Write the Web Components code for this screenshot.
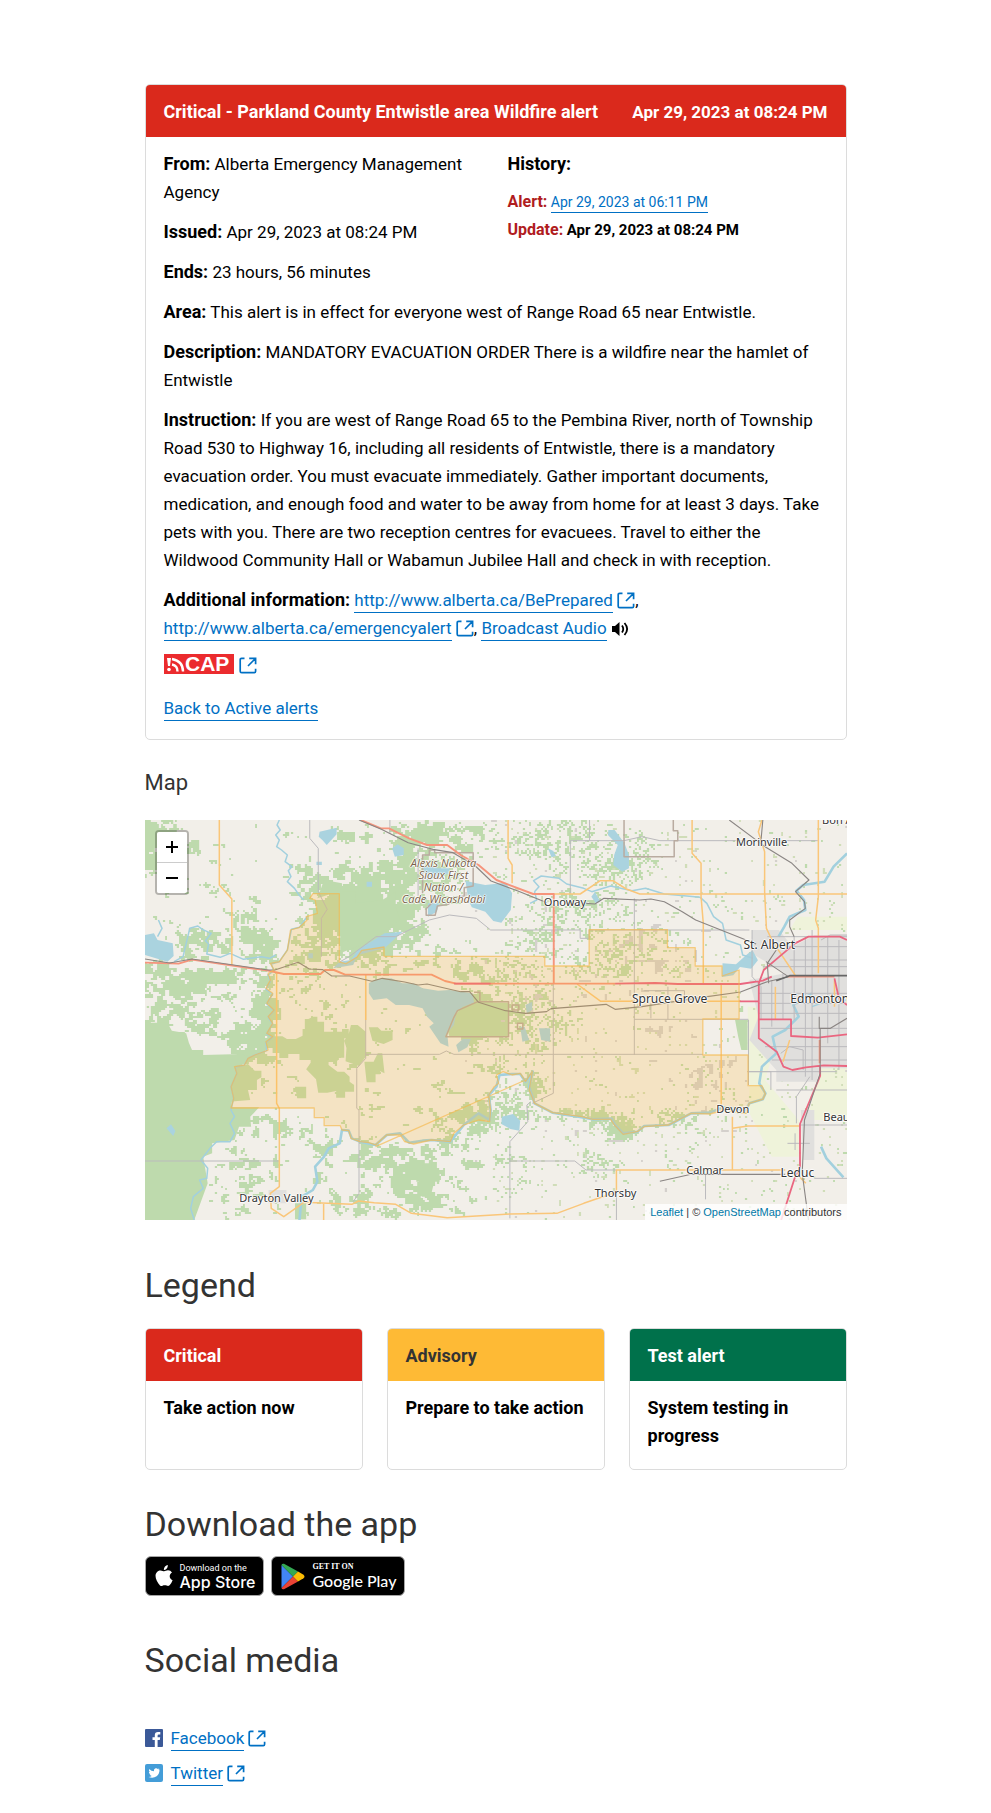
<!DOCTYPE html>
<html lang="en">
<head>
<meta charset="utf-8">
<meta name="viewport" content="width=device-width, initial-scale=1">
<title>Wildfire alert - Parkland County Entwistle area</title>
<style>
body { margin: 0; background: #fff; color: #000; font: 17px/28px Roboto, "Liberation Sans", sans-serif; }
</style>
</head>
<body>
<alert-page></alert-page>
<script>
function define(name, html, setup) {
  const template = document.createElement('template');
  template.innerHTML = html;
  customElements.define(name, class extends HTMLElement {
    connectedCallback() {
      if (this.shadowRoot) return;
      this.attachShadow({ mode: 'open' }).append(template.content.cloneNode(true));
      if (setup) setup(this, this.shadowRoot);
    }
  });
}

/* Arrow leaving a box, shown after links to other sites */
define('external-icon', `
<style>
:host { display: inline-block; width: 18px; height: 17px; vertical-align: -3px; }
svg { display: block; }
</style>
<svg width="18" height="17" viewBox="0 0 18 17" fill="none" stroke="#0070c4" stroke-width="1.7" aria-hidden="true">
<path d="M5.5 1.3H2.6Q1.2 1.3 1.2 2.7V14.2Q1.2 15.7 2.7 15.7H15.3Q16.6 15.7 16.6 14.2V11.8M10.2 1.3H16.6V7.3M16.4 1.5L9 9"/>
</svg>`);

define('alert-card', `
<style>
:host { display: flex; flex-direction: column; border: 1px solid #dcdcdc; border-radius: 5px; overflow: hidden; --tone: #da291c; --ink: #fff; }
:host([tone=advisory]) { --tone: #feba35; --ink: #333; }
:host([tone=test]) { --tone: #00714b; --ink: #fff; }
header { display: flex; justify-content: space-between; gap: 16px; padding: 13px 18px 11px; background: var(--tone); color: var(--ink); font-size: 18px; font-weight: 700; }
::slotted([slot=date]) { font-size: 17px; }
section { padding: 13px 18px 17px; }
:host([tone]) section { padding-bottom: 19px; }
</style>
<header><slot name="title"></slot><slot name="date"></slot></header>
<section><slot></slot></section>`);

define('store-badge', `
<style>
:host { display: block; }
a { display: flex; align-items: center; height: 38px; border: 1px solid #a6a6a6; border-radius: 6px; background: #000; color: #fff; text-decoration: none; padding: 0 8px 0 9px; gap: 7px; }
span { display: flex; flex-direction: column; }
small { font-size: 9px; line-height: 11px; white-space: nowrap; }
b { font: 500 16px/16px Inter, sans-serif; white-space: nowrap; }
:host([store=google]) small { font: 700 8px/10px "Liberation Serif", serif; }
:host([store=google]) b { font: 500 16px/18px Lato, sans-serif; }
</style>
<a href="#"><slot name="icon"></slot><span><small><slot name="over"></slot></small><b><slot></slot></b></span></a>`);

define('social-link', `
<style>
:host { display: flex; align-items: center; line-height: 28px; }
::slotted(svg) { display: block; width: 18px; height: 18px; margin-right: 8px; }
a { color: #0070c4; text-decoration: none; }
a span { border-bottom: 1px solid #0070c4; padding-bottom: 2px; }
external-icon { margin-left: 4px; }
</style>
<slot name="icon"></slot><a href="#"><span><slot></slot></span><external-icon></external-icon></a>`);

define('map-place', `
<style>
:host { position: absolute; transform: translate(-50%, -50%); font: 11px/12px "Noto Sans", sans-serif; color: #333; white-space: nowrap; text-align: center; text-shadow: 1px 0 1px #fff, -1px 0 1px #fff, 0 1px 1px #fff, 0 -1px 1px #fff; }
:host([size=large]) { font-size: 12px; }
:host([kind=reserve]) { font-family: "Open Sans", sans-serif; font-style: italic; color: #7a624a; }
</style>
<slot></slot>`, host => { host.style.left = host.getAttribute('x') + '%'; host.style.top = host.getAttribute('y') + '%'; });

define('area-map', `
<style>
:host { display: block; position: relative; height: 400px; overflow: hidden; background: #f2efe9; }
svg { display: block; width: 100%; height: 100%; }
svg * { vector-effect: non-scaling-stroke; }
.zoom { position: absolute; left: 10px; top: 10px; border: 2px solid rgba(0,0,0,.25); border-radius: 4px; display: grid; overflow: hidden; }
.zoom button { width: 30px; height: 30px; padding: 0; border: 0; background: #fff; color: #000; display: grid; place-items: center; }
.zoom button:first-child { height: 31px; border-bottom: 1px solid #ccc; }
.zoom svg { width: 14px; height: 14px; }
.credit { position: absolute; right: 0; bottom: 0; padding: 0 5px; background: rgba(255,255,255,.8); color: #333; font: 11px/16px "Liberation Sans", sans-serif; }
.credit a { color: #0078a8; text-decoration: none; }
</style>
<svg viewBox="0 0 1568 1200" preserveAspectRatio="none" fill="none" stroke-linejoin="round" role="img" aria-label="Map of the alert area">
  <path fill="#eff3da" d="M1346 560H1420V620L1385 780L1460 900V1010H1400L1350 880V790ZM1440 330h128v-40h-110zM1510 640l58-20v280h-90l30-140z"/>
  <path id="woods" fill="#bedaad"/>
  <path id="specks" fill="#d0ddb8"/>
  <path fill="#bedaad" d="M0 608H50L60 632L92 640L98 668L105 690L130 690V705L215 702L240 712L210 740L200 800L192 862H255L235 890L237 920H210L200 960L150 970V1000L130 1010L140 1090L110 1200H0ZM385 235L400 180L440 190V215H470V250L530 240L560 215V260L570 300L520 345L500 365L436 400V220H420ZM676 630L690 590L705 565L735 545L812 548V650H680ZM1318 600H1346V690H1332L1325 650ZM335 1150h25v48h-25z"/>
  <path fill="#bedaad" d="M375 590h10v15h15v30h40v-8h15v28h-10v58h-15v10h-20v12l20 20h15l12 15v15l10 10v20h-20v18h-20v-20l-20 5h-20l-5-40-22-30 10-20v-8h-25v-18h-25v12h-20v-15h-15v-50h22l10 8h20l15-10v-20h5v-30h8zM460 615h15l18 20v75l-15 28-30-14 2-40-5-22 10-20zM205 742l25-10 15 20h15v20l-10 8v30h-20l5 30-48 5v-35zM500 622h20l8 10h25v28l-20 12-25-10zM622 1030h18v20h18v35h-12l-8 45h-20v-45h-12v-40h12zM520 700h10l5 60-30-20zM490 725h20v18h15v20h-10v24h-20zM335 800h25v35h-20z"/>
  <path id="towns" fill="#d4d0cc"/>
  <path fill="#e0dfdd" d="M1356 330h60l30 50 50-35h72v400h-60l-8 40h-90v-35l-60-90 20-70-20-110 80-20-75-60zM1465 870h30v150h-25zM276 1110h40v40h-40z"/>
  <g fill="#aad3df">
    <path d="M716 182L740 190L760 195L806 188L820 220L817 270L796 308L778 303L760 275L730 262L722 240ZM0 345L20 340L28 360L62 370L64 408L50 425L0 405ZM390 35l38-12v20l-22 32-10-15-8-10zM552 85l12-12 14 12v20l-20 5zM1035 30l14 0 22 40 10 35v40l-15 10-20-20 2-30 8-30-22-30zM1290 430l30 3 25-30 12-12 12 30-15 25-25-5-15 25-25 5zM797 890l25-8 16 20-2 30-20-5-20-15zM475 390l60-50 40-5-40 50-60 20-10 30-45 10 15-20 25-5zM48 925l10-12 10 20-5 15zM620 140l30 0 10 30-30 10zM650 145h30v18h-30zM632 250l25 0-5 25-20 15zM1005 215l12 30-10 5-10-20zM900 85l12 8 6 15-10 4zM365 400h10v15h-10zM383 125h12v10h-12zM495 185h12v15h-12z"/>
    <path d="M500 490L515 478L550 475L575 490L600 490L620 505L655 512L680 510L732 520L735 548L710 560L695 580L690 615L675 640L678 680L660 670L635 620L645 610L630 590L620 565L590 555L560 555L540 535L510 540L500 520ZM695 675l15-18h18l-8 25-20 15zM838 620h10l10 40-15 5zM880 625h25v40l-20-5zM850 555l15-10v25l-12 10z"/>
  </g>
  <g stroke="#a2d0de" stroke-width="1.500">
    <path d="M300 0L295 15L302 30L292 45L300 60L294 80L305 90L318 105L313 125L328 140L320 152L326 170L318 185L334 205L344 225L355 240"/>
    <path d="M65 425L85 410L100 325L118 318L128 328L148 340L135 362L142 372L138 402L168 412L190 400L220 418L260 410L278 415L292 405M30 300L38 325L28 350"/>
    <path d="M362 290L345 322L327 328L318 390L300 425L282 432L288 452L275 465L280 485L270 508L285 522L272 552L288 572L275 592L285 612L272 642L285 652L270 668L272 692L245 705L230 715L222 735L202 742L205 762L192 800L198 835L192 870L200 890L190 910L200 940L190 965L160 965L145 985L125 1020L140 1045L138 1075L122 1080L130 1105L108 1130L102 1165L110 1200"/>
    <path stroke-width="2.600" d="M345 1200L350 1130L375 1110L385 1085L380 1040L400 1010L410 985L435 970L440 930L455 932L462 955L480 965L515 975L540 945L570 940L590 968L620 962L640 960L682 965L712 915L745 880L770 900L772 870L768 825L785 800L792 765L820 762L838 762L850 785L866 755L858 800L870 850L910 878L975 892L1000 898L1042 896L1050 915L1068 940L1100 935L1115 918L1170 915L1220 880L1262 878L1290 862L1342 870L1350 850L1380 838L1386 820L1372 790L1378 740L1410 700L1402 650L1430 630L1460 590L1448 555L1490 520"/>
    <path d="M870 215L880 200L868 182L885 168L925 175L942 192L980 205L998 215L1040 198L1088 212L1118 205L1160 222L1210 228L1240 232L1255 250L1270 290L1290 310L1298 360L1330 375L1335 405L1358 415M870 215L875 240L860 250M1490 560L1520 545L1568 540"/>
    <path d="M1568 100L1538 140L1518 185L1470 195L1455 212L1472 240L1475 270L1440 290L1428 320L1415 350M1510 980L1522 1015L1560 1072" stroke-width="2.600"/>
  </g>
  <g stroke="#bbbabd" stroke-width="1">
    <path d="M368 0V55L387 85V215L407 268L394 295V410M610 85V245M547 0V42M950 220V62H1070L1110 50L1150 62H1503M436 425L456 410L516 350H560L635 300L680 285L740 295L772 330H972V355H992V329M992 330H1350M1093 235V705M912 490V820L865 850M493 465V715L473 745V865L478 870V1120L465 1145M493 703H658L673 693L690 703H1246M815 1195V965L855 905L853 855L862 845M0 1023H300M815 1023H960L985 1050H1053M1053 1110V1200M1252 1062V1138M1462 915H1568M1495 1075H1568M993 0V62"/>
    <path d="M1390 350H1568M1380 380H1568M1440 420H1568M1380 440H1568M1370 520H1568M1370 550H1568M1370 580H1568M1375 625H1568M1385 680H1568M1400 720H1568M1345 755H1545M1410 810H1568M1348 700V755H1398V810M1400 480V620M1425 460V600M1450 350V600M1475 350V770M1490 330V780M1525 350V670M1550 360V750M1356 330V470L1376 500V600M1485 770L1455 830V910M1435 970H1485M1452 940V990M1093 598H1348M1130 550V595M1168 500V598M1115 512H1205V530M1348 600V795M1510 360L1530 345H1568M1420 700L1440 680L1470 690V750"/>
  </g>
  <g stroke="#b9aba0" stroke-width="1.500"><path d="M1070 0V110H1182V62H1190V32H1180V0M620 220V105H635V90H647V98H733V198L713 203V228L688 233L678 253L653 258L648 286H628V266L643 246V226M812 545V650H672L690 592L698 572L743 545ZM820 555H835V570H820ZM832 610H844V627H832ZM735 517H748V547"/></g>
  <g stroke="#fac679" stroke-width="1.500">
    <path d="M166 0V195L194 237V435M294 455V850L300 865V1100L280 1120L282 1165L310 1190L355 1147L462 1153L477 1143L512 1148L560 1153L595 1180L675 1193L815 1182L920 1180L980 1150L1045 1120L1053 1112V1050H1430M399 1152V1200M811 0V115L820 135V190M493 465V600M1222 0V100L1242 130V230L1247 310V490M1378 0L1370 35L1384 95V215L1388 325L1402 365L1452 465M1504 0V230L1498 300L1504 325V460M912 222H972L1017 182H1045L1075 207L1105 222H1568M965 492L1018 544H1093M1240 544H1330M1287 492V855M1312 890V1050M1312 925L1347 918H1462M1408 500V600M1440 660L1425 725M1540 480V560M1462 1070L1476 1090"/>
  </g>
  <path stroke="#f6947c" stroke-width="1.900" d="M482 0L527 25H545L590 55L630 75H675L705 105L745 135L785 180L867 222H913V490M0 428L75 431L105 419L275 452L310 462H392L402 450H422L447 464H640L670 483L695 491H1050M1435 470H1540M1507 660V730"/>
  <path stroke="#ea6680" stroke-width="1.800" d="M690 491H772M1050 491L1140 489L1190 492H1330L1380 482L1400 470M1371 490V655L1411 695L1426 740L1446 750L1476 742L1516 736L1568 738M1371 598H1443V648L1503 653L1568 643M1371 490L1382 450L1417 410L1452 370L1482 350H1552L1568 360M1328 544H1372M1508 735V768L1463 912V1042L1451 1075L1421 1200M1540 475L1550 535L1568 555"/>
  <path stroke="#8a8583" stroke-width="1.100" d="M478 0L528 28L588 68L643 88L688 98L738 138L773 183L833 213L898 248M985 250L1005 252L1025 235L1105 240L1130 237L1160 245L1200 275L1230 300L1365 372M0 417L55 429L105 417L275 450H290L342 427L367 447L397 449L417 468H457L507 484L530 475L580 486L610 495L630 492L705 515H725L745 547L805 572L850 580L897 575L907 566L1030 553L1050 568L1110 560L1240 533L1330 516L1390 485L1437 470M1305 0L1385 80L1445 130L1483 180L1453 215L1473 245L1475 265L1440 300V320L1450 350M1380 0L1376 60M1393 490L1390 430L1410 390M1437 470L1387 425M1506 590V625H1531L1568 595M1508 625V760L1473 900L1468 1060L1482 1200M1150 1084L1220 1063H1430"/>
  <path stroke="#666" stroke-width="1.600" d="M1410 482L1440 467H1568"/>
  <path fill="#ffb32b" fill-opacity=".2" stroke="#f6b84b" stroke-opacity=".65" stroke-width="1.300" d="M375 221H434V426L449 431L474 411L484 391L534 381V409H893V438H992V329H1167V383H1229V438H1289V468L1327 450V597H1246V705H1347V797H1378L1386 822L1380 838L1350 850L1342 880L1290 872L1262 882L1220 880L1170 915L1115 920L1100 935L1068 943L1048 915L1040 898L1000 898L975 890L910 878L870 850L858 810L865 755L850 785L838 760L820 765L800 755L785 765L790 790L780 800L768 825L772 870L770 905L745 900L712 915L690 940L682 965L640 960L600 972L580 965L570 945L540 945L515 975L500 968L480 965L460 955L455 932L440 930L436 917H400V893H378V864H192L198 835L192 800L205 760L200 740L222 735L230 715L245 705L275 690L270 665L285 650L272 640L285 610L275 590L288 570L272 550L285 520L270 505L280 480L275 460L288 450L280 430L300 425L318 390L325 330L345 322L362 300L360 290L385 280L380 240L368 235ZM515 980L850 780"/>
</svg>
<map-place kind="reserve" x="42.600" y="15.300">Alexis Nakota<br>Sioux First<br>Nation /<br>Cade Wicashdabi</map-place>
<map-place x="59.900" y="20.500">Onoway</map-place>
<map-place x="87.900" y="5.500">Morinville</map-place>
<map-place x="98.700" y="0">Bon A</map-place>
<map-place size="large" x="89" y="31.200">St. Albert</map-place>
<map-place size="large" x="74.800" y="44.800">Spruce Grove</map-place>
<map-place size="large" x="96.200" y="44.800">Edmonton</map-place>
<map-place x="83.800" y="72.300">Devon</map-place>
<map-place x="99.300" y="74.200">Beaum</map-place>
<map-place x="79.800" y="87.600">Calmar</map-place>
<map-place size="large" x="93" y="88.300">Leduc</map-place>
<map-place x="67.100" y="93.300">Thorsby</map-place>
<map-place x="18.800" y="94.400">Drayton Valley</map-place>
<div class="zoom">
<button aria-label="Zoom in"><svg viewBox="0 0 14 14" stroke="#000" stroke-width="2"><path d="M1 7H13M7 1V13"/></svg></button>
<button aria-label="Zoom out"><svg viewBox="0 0 14 14" stroke="#000" stroke-width="2"><path d="M1 7H13"/></svg></button>
</div>
<div class="credit"><a href="#">Leaflet</a> | © <a href="#">OpenStreetMap</a> contributors</div>`,
(host, root) => {
  const hash = (x, y, s) => { let h = Math.imul(x, 374761393) + Math.imul(y, 668265263) + s * 974634; h = Math.imul(h ^ (h >>> 13), 1274126177); return ((h ^ (h >>> 16)) >>> 0) / 4294967296; };
  const noise = (x, y, s) => {
    const i = Math.floor(x), j = Math.floor(y), u = x - i, v = y - j;
    const a = hash(i, j, s), b = hash(i + 1, j, s), c = hash(i, j + 1, s), d = hash(i + 1, j + 1, s);
    return (a + (b - a) * u) * (1 - v) + (c + (d - c) * u) * v;
  };
  /* tree cover: centre, radii, share of the ground */
  const cover = [
    [20,60,50,90,.75],[120,110,55,60,.45],[220,20,90,30,.3],[150,200,60,30,.4],[340,150,40,50,.4],[60,340,90,50,.4],[225,330,50,60,.65],[120,370,60,60,.6],
    [480,280,110,110,.85],[540,160,90,60,.6],[480,40,70,30,.5],[640,40,110,45,.6],[600,150,80,80,.6],[690,90,60,60,.55],[660,200,60,60,.6],[640,330,120,50,.38],[620,400,100,30,.4],
    [50,480,110,60,.6],[100,570,150,60,.55],[265,560,30,180,.7],[245,660,50,60,.7],[190,480,90,40,.5],
    [400,300,40,90,.75],[370,380,60,60,.6],[420,540,70,90,.42],[330,500,50,50,.45],
    [860,60,90,70,.45],[960,40,100,60,.42],[920,130,80,60,.4],[1050,130,80,90,.5],[930,290,100,80,.5],[850,380,80,50,.45],[1080,280,60,50,.4],
    [620,440,180,30,.42],[760,440,100,40,.5],[830,540,70,50,.5],[1050,400,80,80,.5],[1130,360,60,60,.4],[850,600,90,80,.48],[1180,430,60,60,.38],[960,440,50,50,.4],
    [740,600,60,60,.8],[430,690,80,60,.4],[570,730,100,50,.35],[540,830,90,70,.33],[650,870,80,70,.38],[770,720,60,50,.45],[830,720,80,30,.4],
    [740,890,60,50,.65],[540,1000,100,50,.55],[620,1080,100,100,.62],[700,1000,60,60,.55],[450,1080,80,90,.42],[310,920,110,40,.5],[230,1080,70,90,.48],[520,1160,80,40,.45],[430,1150,60,50,.4],[800,1060,110,110,.34],[390,970,60,40,.45],
    [820,860,40,60,.6],[940,885,80,16,.55],[1020,890,40,20,.7],[1060,920,35,30,.75],[1020,1030,70,35,.5],[1080,1060,40,70,.35],[1190,890,60,25,.5],[1240,940,30,50,.35],[1260,800,70,90,.36],[860,800,25,50,.6]
  ];
  const SX = 1568 / 702, cell = 2;
  const layer = test => {
    let d = '';
    for (let y = 0; y < 400; y += cell) {
      let start = -1;
      for (let x = 0; x <= 702; x += cell) {
        const on = x < 702 && test(x * SX, y * 3, x, y);
        if (on && start < 0) start = x;
        if (!on && start >= 0) { d += 'M' + Math.round(start * SX) + ' ' + y * 3 + 'H' + Math.round(x * SX) + 'v6H' + Math.round(start * SX) + 'z'; start = -1; }
      }
    }
    return d;
  };
  root.getElementById('woods').setAttribute('d', layer((X, Y, x, y) => {
    let k = X < 860 ? .25 : .2;
    for (const [a, b, r, q, w] of cover) { const e = ((X - a) / r) ** 2 + ((Y - b) / q) ** 2; if (e < 4) k = Math.max(k, w * Math.exp(-e * .35)); }
    const qx = x >> 2, qy = y >> 2;
    const n = X < 780 ? noise(x / 10, y / 8, 1) * .4 + noise(x / 5, y / 4, 2) * .3 + hash(qx, qy, 3) * .2 + hash(x, y, 6) * .1
                      : noise(x / 12, y / 10, 1) * .25 + noise(x / 4, y / 4, 2) * .4 + hash(x, y, 3) * .35;
    return n < k;
  }));
  root.getElementById('specks').setAttribute('d', layer((X, Y, x, y) => X > 760 && noise(x / 3, y / 4, 8) < .1 && hash(x, y, 5) < .7));
  root.getElementById('towns').setAttribute('d', layer((X, Y, x, y) => {
    const near = (a, b, r, q) => Math.exp(-(((X - a) / r) ** 2 + ((Y - b) / q) ** 2));
    const k = .04 + .28 * near(1100, 370, 90, 60) + .4 * near(1250, 770, 70, 90) + .3 * near(1140, 640, 30, 50) + .24 * near(980, 500, 160, 60) + .25 * near(870, 330, 50, 60) + .2 * near(1180, 450, 70, 50);
    return X > 700 && noise(x / 5, y / 5, 11) < k;
  }));
});

define('alert-page', `
<style>
:host { display: block; padding: 84px 16px 26px; }
main { max-width: 702px; margin: 0 auto; }
p { margin: 0 0 12px; }
p:last-child { margin: 0; }
b { font-weight: 700; }
p > b, .legend b { font-size: 18px; }
a { color: #0070c4; text-decoration: none; }
a.line, a.line-wrap span { border-bottom: 1px solid #0070c4; padding-bottom: 2px; }
h1 { font-size: 18px; line-height: 28px; margin: 0; font-weight: 700; }
h2 { font-size: 34px; line-height: 40px; font-weight: 400; color: #333; margin: 0; }
h3 { font-size: 22px; line-height: 32px; font-weight: 400; color: #333; margin: 27px 0 21px; }
.meta { display: grid; grid-template-columns: 1fr 1fr; gap: 24px; margin-bottom: 12px; }
.history { font-size: 14px; }
.history p { margin: 0 0 10px; font-size: 17px; }
.history ul { list-style: none; margin: 0; padding: 0; }
.history ul b { font-size: 16px; color: #b01c20; }
.history .now { font-size: 15px; font-weight: 700; }
.audio { vertical-align: -3px; }
.cap { display: flex; align-items: flex-start; gap: 5px; height: 28px; }
.cap svg { overflow: visible; }
.cap external-icon { margin-top: 3px; }
.legend { display: grid; grid-template-columns: repeat(3, 1fr); gap: 24px; }
.badges { display: flex; gap: 7px; }
.badges svg { display: block; flex: none; }
.social { display: grid; gap: 7px; }
.s1 { margin: 45px 0 23px; } .s2 { margin: 34px 0 12px; } .s3 { margin: 44px 0 44px; }
@media (max-width: 600px) { .meta, .legend { grid-template-columns: 1fr; } }
</style>
<main>
<alert-card>
<h1 slot="title">Critical - Parkland County Entwistle area Wildfire alert</h1>
<span slot="date">Apr 29, 2023 at 08:24 PM</span>
<div class="meta">
<div>
<p><b>From:</b> Alberta Emergency Management Agency</p>
<p><b>Issued:</b> Apr 29, 2023 at 08:24 PM</p>
<p><b>Ends:</b> 23 hours, 56 minutes</p>
</div>
<div class="history">
<p><b>History:</b></p>
<ul>
<li><b>Alert:</b> <a class="line" href="#">Apr 29, 2023 at 06:11 PM</a></li>
<li><b>Update:</b> <span class="now">Apr 29, 2023 at 08:24 PM</span></li>
</ul>
</div>
</div>
<p><b>Area:</b> This alert is in effect for everyone west of Range Road 65 near Entwistle.</p>
<p><b>Description:</b> MANDATORY EVACUATION ORDER There is a wildfire near the hamlet of Entwistle</p>
<p><b>Instruction:</b> If you are west of Range Road 65 to the Pembina River, north of Township Road 530 to Highway 16, including all residents of Entwistle, there is a mandatory evacuation order. You must evacuate immediately. Gather important documents, medication, and enough food and water to be away from home for at least 3 days. Take pets with you. There are two reception centres for evacuees. Travel to either the Wildwood Community Hall or Wabamun Jubilee Hall and check in with reception.</p>
<p><b>Additional information:</b> <a class="line-wrap" href="#"><span>http://www.alberta.ca/BePrepared</span> <external-icon></external-icon></a>, <a class="line-wrap" href="#"><span>http://www.alberta.ca/emergencyalert</span> <external-icon></external-icon></a>, <a class="line" href="#">Broadcast Audio</a> <svg class="audio" width="19" height="16" viewBox="0 0 19 16" aria-hidden="true"><path d="M1 5H4L8.500 1V15L4 11H1Z"/><path d="M11 4.500Q13.500 8 11 11.500M13.500 2Q18.800 8 13.500 14" fill="none" stroke="#000" stroke-width="1.800"/></svg></p>
<p><a class="cap" href="#"><svg width="70" height="20" viewBox="0 0 70 20" role="img" aria-label="CAP feed"><path fill="#eb2b2e" d="M0 0H70V20H0Z"/><path fill="#fff" d="M3 4H7L6 12H4Z"/><circle cx="5" cy="15.500" r="1.800" fill="#fff"/><path d="M8 5Q19 7 19 17.500M8 10.500Q13.500 11.500 13.500 17.500" fill="none" stroke="#fff" stroke-width="2.400"/><text x="21" y="17" font-family="Liberation Sans" font-weight="700" font-size="21" fill="#fff">CAP</text></svg><external-icon></external-icon></a></p>
<p><a class="line" href="#">Back to Active alerts</a></p>
</alert-card>
<h3>Map</h3>
<area-map></area-map>
<h2 class="s1">Legend</h2>
<div class="legend">
<alert-card tone="critical"><span slot="title">Critical</span><b>Take action now</b></alert-card>
<alert-card tone="advisory"><span slot="title">Advisory</span><b>Prepare to take action</b></alert-card>
<alert-card tone="test"><span slot="title">Test alert</span><b>System testing in progress</b></alert-card>
</div>
<h2 class="s2">Download the app</h2>
<div class="badges">
<store-badge store="apple"><svg slot="icon" width="18" height="22" viewBox="0 0 18 22" fill="#fff" aria-hidden="true"><path d="M12.800 0Q13 2.200 11.600 3.700T8.900 5.100Q8.700 3.100 10 1.600T12.800 0ZM9.200 6.300C10.200 6.300 11.200 5.300 13 5.300Q15.600 5.400 17 7.500C13.700 9.500 14 13.800 17.600 15.200Q16.700 17.600 15 19.800C13.200 22 12 20.300 9.800 20.300C7.500 20.300 6.800 21.900 5 20.400C1.600 17.300-.8 11 1.300 7.900C2.600 6 4 5.400 5.600 5.400C7 5.400 8.200 6.300 9.200 6.300Z"/></svg><span slot="over">Download on the</span>App Store</store-badge>
<store-badge store="google"><svg slot="icon" width="24" height="27" viewBox="0 0 24 27" aria-hidden="true"><path fill="#4285f4" d="M.5 2V25L12 13.500Z"/><path fill="#34a853" d="M.5 2Q1 .3 3 .8L17 8.500L12 13.500Z"/><path fill="#ea4335" d="M.5 25Q1 26.800 3 26.200L17 18.500L12 13.500Z"/><path fill="#fbbc04" d="M17 8.500L22.500 11.700Q24.500 13.500 22.500 15.300L17 18.500L12 13.500Z"/></svg><span slot="over">GET IT ON</span>Google Play</store-badge>
</div>
<h2 class="s3">Social media</h2>
<div class="social">
<social-link><svg slot="icon" viewBox="0 0 18 18" aria-hidden="true"><rect width="18" height="18" rx="1" fill="#3b5998"/><path fill="#fff" d="M9.800 18V11H7.500V8.300H9.800V6.200Q9.800 3 13 3H15.300V5.600H13.800Q12.600 5.600 12.600 6.800V8.300H15.200L14.800 11H12.600V18Z"/></svg>Facebook</social-link>
<social-link><svg slot="icon" viewBox="0 0 18 18" aria-hidden="true"><rect width="18" height="18" rx="2" fill="#449dd8"/><path fill="#fff" d="M14.500 5.800Q14.600 10 11.600 12.300Q8 14.800 3.500 12.900Q5.400 12.900 6.700 11.900Q5 11.700 4.600 10.300H5.500Q3.900 9.600 3.900 7.900L4.800 8.100Q3.300 6.600 4.300 4.900Q6.200 7.100 8.900 7.200Q8.600 4.900 10.600 4.300Q11.900 4 12.800 5L14.200 4.500Q14 5.300 13.300 5.700L14.700 5.400Z"/></svg>Twitter</social-link>
</div>
</main>`);
</script>
</body>
</html>
